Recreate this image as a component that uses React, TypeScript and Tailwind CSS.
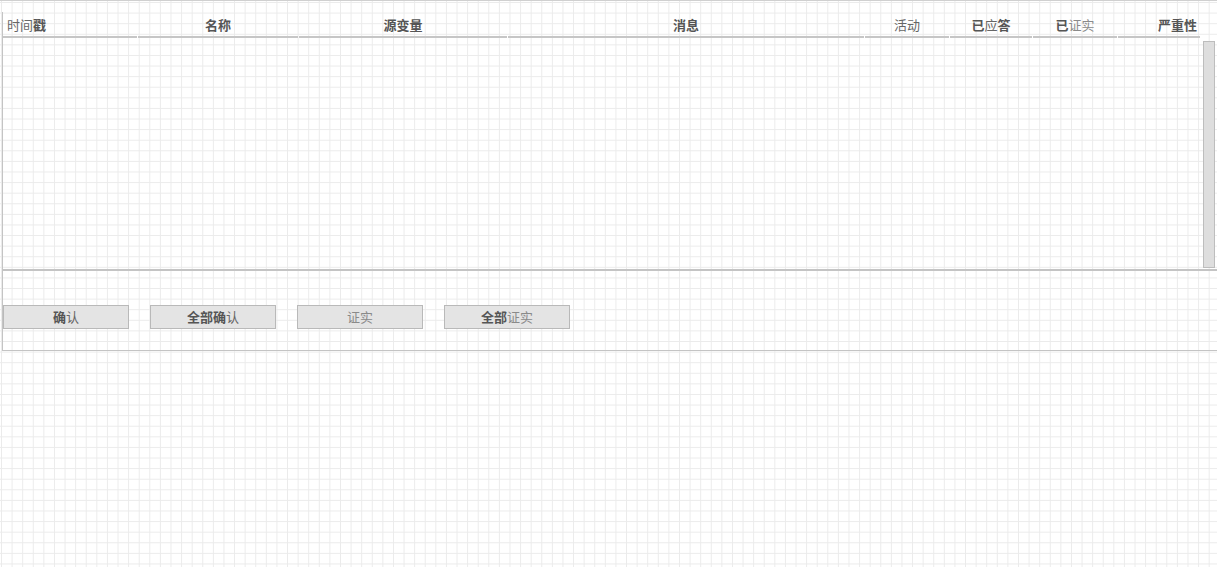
const font = { fontFamily: '"Noto Sans CJK SC", "Liberation Sans", sans-serif' };

type Col = { label: React.ReactNode; width: string; align: string };

const Dim = ({ children }: { children: React.ReactNode }) => (
  <span className="font-normal text-[#8a8a8a]">{children}</span>
);

const Light = ({ children }: { children: React.ReactNode }) => (
  <span className="font-normal text-[#666]">{children}</span>
);

const columns: Col[] = [
  { label: <><Light>时间</Light>戳</>, width: 'w-[134px]', align: 'justify-start pl-[4px]' },
  { label: '名称', width: 'w-[160px]', align: 'justify-center' },
  { label: '源变量', width: 'w-[208px]', align: 'justify-center' },
  { label: '消息', width: 'w-[356px]', align: 'justify-center' },
  { label: <Light>活动</Light>, width: 'w-[84px]', align: 'justify-center' },
  { label: <>已<Light>应</Light>答</>, width: 'w-[82px]', align: 'justify-center' },
  { label: <>已<Dim>证实</Dim></>, width: 'w-[84px]', align: 'justify-center' },
  { label: '严重性', width: 'w-[82px]', align: 'justify-end pr-[3px]' },
];

function Button({ children }: { children: React.ReactNode }) {
  return (
    <button className="flex h-[24px] w-[126px] items-center justify-center border border-[#b9b9b9] bg-[#e4e4e4] text-[13px] font-bold text-[#555]">
      {children}
    </button>
  );
}

export default function App() {
  return (
    <div
      style={font}
      className="h-[567px] w-[1217px] overflow-hidden bg-white bg-[linear-gradient(to_right,#ebebeb_1px,transparent_1px),linear-gradient(to_bottom,#ebebeb_1px,transparent_1px)] bg-[size:10.6px_10.6px] bg-[position:1px_2px]"
    >
      <div className="flex flex-col border-t border-[#d0d0d0] pt-[11px]">
        <div className="ml-[2px] flex flex-col border-l border-[#c4c4c4]">
          {/* header */}
          <div className="flex h-[26px] items-stretch">
            {columns.map((c, i) => (
              <div key={i} className={`${c.width} mr-[1px] flex items-center border-b-2 border-[#c6c6c6] ${c.align} text-[13px] font-bold text-[#555]`}>
                <span className="leading-none">{c.label}</span>
              </div>
            ))}
          </div>
          {/* body */}
          <div className="flex h-[233px] justify-end border-b-2 border-[#c4c4c4] pr-[2px] pt-[3px] pb-[1px]">
            <div className="w-[12px] border border-[#bdbdbd] bg-[#dedede]" />
          </div>
          {/* buttons */}
          <div className="flex h-[80px] gap-[21px] border-b border-[#c4c4c4] pt-[34px]">
            <Button>确<Light>认</Light></Button>
            <Button>全部确<Light>认</Light></Button>
            <Button><Dim>证实</Dim></Button>
            <Button>全部<Dim>证实</Dim></Button>
          </div>
        </div>
      </div>
    </div>
  );
}
